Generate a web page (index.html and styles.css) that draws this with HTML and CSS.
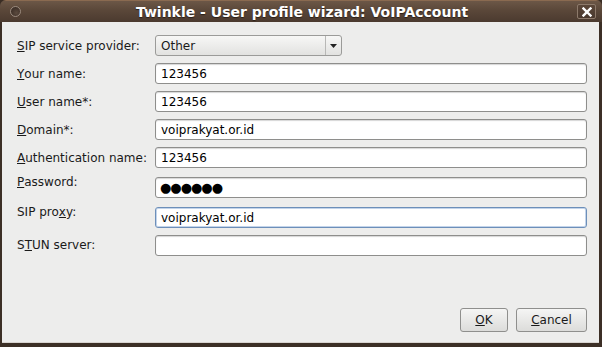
FILE: index.html
```html
<!DOCTYPE html>
<html>
<head>
<meta charset="utf-8">
<link rel="stylesheet" href="styles.css">
</head>
<body>
<div class="window">
  <div class="titlebar">
    <span class="winicon"></span>
    <span class="title">Twinkle - User profile wizard: VoIPAccount</span>
    <span class="close">
      <svg width="10" height="10" viewBox="0 0 10 10"><path d="M1.5 1.5 L8.5 8.5 M8.5 1.5 L1.5 8.5" stroke="#fff" stroke-width="2.4" stroke-linecap="square"/></svg>
    </span>
  </div>
  <div class="content">
    <div class="form">
      <label class="lbl r1"><u>S</u>IP service provider:</label>
      <div class="combo r1"><span class="combo-text">Other</span><span class="combo-btn"><svg width="7" height="4" viewBox="0 0 7 4"><path d="M0 0 H7 L3.5 4 Z" fill="#222"/></svg></span></div>

      <label class="lbl r2"><u>Y</u>our name:</label>
      <div class="field r2">123456</div>

      <label class="lbl r3"><u>U</u>ser name*:</label>
      <div class="field r3">123456</div>

      <label class="lbl r4"><u>D</u>omain*:</label>
      <div class="field r4">voiprakyat.or.id</div>

      <label class="lbl r5"><u>A</u>uthentication name:</label>
      <div class="field r5">123456</div>

      <label class="lbl r6 up"><u>P</u>assword:</label>
      <div class="field r6 pwd">●●●●●●</div>

      <label class="lbl r7 up">SIP pro<u>x</u>y:</label>
      <div class="field r7 focus">voiprakyat.or.id</div>

      <label class="lbl r8">S<u>T</u>UN server:</label>
      <div class="field r8"></div>
    </div>
    <div class="buttons">
      <button class="btn ok"><u>O</u>K</button>
      <button class="btn cancel"><u>C</u>ancel</button>
    </div>
  </div>
</div>
</body>
</html>
```

FILE: styles.css
```css
html, body {
  margin: 0;
  padding: 0;
  background: #3a2d24;
}
.window {
  width: 602px;
  height: 347px;
  box-sizing: border-box;
  display: flex;
  flex-direction: column;
  background: #3c2f26;
  border-radius: 6px 6px 0 0;
  overflow: hidden;
  font-family: "DejaVu Sans", sans-serif;
}
.titlebar {
  height: 22px;
  flex: none;
  display: flex;
  align-items: center;
  position: relative;
  background: linear-gradient(#6c5747 0%, #5a4739 45%, #4b3a2f 100%);
  border-top: 1px solid #8a6a50;
  box-sizing: border-box;
}
.winicon {
  position: absolute;
  left: 10px;
  top: 5px;
  width: 9px;
  height: 9px;
  border-radius: 50%;
  border: 1px solid #9a8a7e;
  background: radial-gradient(circle at 60% 65%, #5b4a3e 0%, #3e3028 70%);
}
.title {
  flex: 1;
  text-align: center;
  color: #fff;
  font-weight: bold;
  font-size: 14px;
  letter-spacing: 0;
  text-shadow: 0 1px 1px #2a1f18;
  padding-left: 2px;
}
.close {
  position: absolute;
  right: 6px;
  top: 3px;
  width: 19px;
  height: 15px;
  box-sizing: border-box;
  border: 1px solid #8d7a6b;
  border-radius: 2px;
  background: linear-gradient(#5b4739, #4a392e);
  display: flex;
  align-items: center;
  justify-content: center;
}
.content {
  flex: 1;
  margin: 0 3px 4px 2px;
  background: #ededec;
  display: flex;
  flex-direction: column;
  padding: 13px 12px 10px 15px;
  border-bottom: 1px solid #d8d4d0;
}
.form {
  display: grid;
  grid-template-columns: 138px 1fr;
  grid-template-rows: 21px 21px 21px 21px 21px 21px 21px 21px;
  row-gap: 7px;
  font-size: 12px;
  color: #1a1a1a;
}
.lbl {
  display: flex;
  align-items: center;
  white-space: nowrap;
}
.r6 { margin-top: 2px; }
.r7 { margin-top: 4px; }
.r8 { margin-top: 4px; }
.lbl.r6 { margin-top: -8px; }
.lbl.r7 { margin-top: -4px; }
.lbl.r8 { margin-top: 6px; }
.combo {
  width: 187px;
  height: 21px;
  box-sizing: border-box;
  border: 1px solid #9b9b99;
  border-radius: 3px;
  background: linear-gradient(#f7f7f6, #e2e2e0);
  display: flex;
  align-items: stretch;
}
.combo-text {
  flex: 1;
  display: flex;
  align-items: center;
  padding-left: 5px;
  font-size: 12px;
}
.combo-btn {
  width: 15px;
  border-left: 1px solid #b8b8b6;
  display: flex;
  align-items: center;
  justify-content: center;
}
.field {
  height: 21px;
  box-sizing: border-box;
  border: 1px solid #8e8e8c;
  border-radius: 3px;
  background: #fff;
  box-shadow: inset 0 1px 1px #d6d6d6;
  display: flex;
  align-items: center;
  padding-left: 5px;
  font-size: 12px;
  color: #000;
}
.field.focus {
  border-color: #6d8fb9;
  box-shadow: inset 0 0 0 1px #c3d4ea;
}
.field.pwd {
  font-size: 13px;
  letter-spacing: -1px;
  padding-left: 4px;
}
.buttons {
  margin-top: auto;
  display: flex;
  justify-content: flex-end;
  gap: 8px;
  padding-bottom: 0;
}
.btn {
  height: 24px;
  box-sizing: border-box;
  border: 1px solid #8f8f8d;
  border-radius: 3px;
  background: linear-gradient(#f5f5f4, #dcdcda);
  font-family: "DejaVu Sans", sans-serif;
  font-size: 12px;
  color: #1a1a1a;
  padding: 0;
}
.btn.ok { width: 48px; }
.btn.cancel { width: 71px; }
```
